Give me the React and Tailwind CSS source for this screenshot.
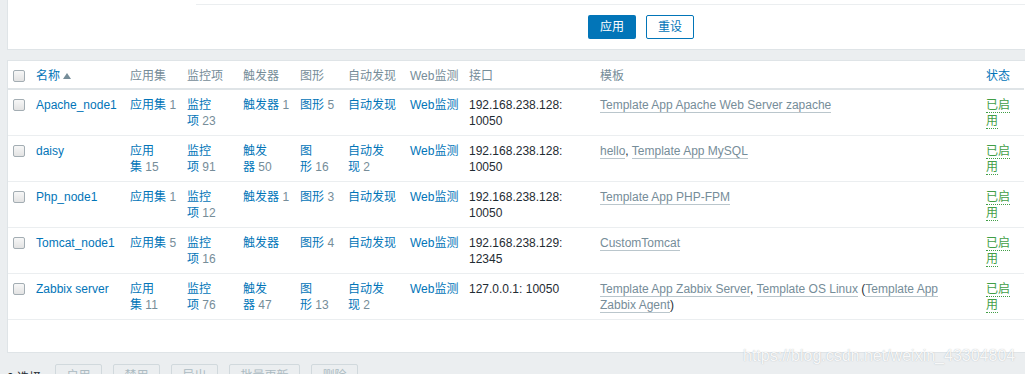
import React from "react"

// host list, laid out like the zabbix 4 blue theme host table
const hosts = [
  {
    name: "Apache_node1",
    apps: 1, items: 23, triggers: 1, graphs: 5, discovery: null,
    iface: "192.168.238.128: 10050",
    templates: [{ t: "Template App Apache Web Server zapache", link: true }],
  },
  {
    name: "daisy",
    apps: 15, items: 91, triggers: 50, graphs: 16, discovery: 2,
    iface: "192.168.238.128: 10050",
    templates: [
      { t: "hello", link: true },
      { t: ", " },
      { t: "Template App MySQL", link: true },
    ],
  },
  {
    name: "Php_node1",
    apps: 1, items: 12, triggers: 1, graphs: 3, discovery: null,
    iface: "192.168.238.128: 10050",
    templates: [{ t: "Template App PHP-FPM", link: true }],
  },
  {
    name: "Tomcat_node1",
    apps: 5, items: 16, triggers: null, graphs: 4, discovery: null,
    iface: "192.168.238.129: 12345",
    templates: [{ t: "CustomTomcat", link: true }],
  },
  {
    name: "Zabbix server",
    apps: 11, items: 76, triggers: 47, graphs: 13, discovery: 2,
    iface: "127.0.0.1: 10050",
    templates: [
      { t: "Template App Zabbix Server", link: true },
      { t: ", " },
      { t: "Template OS Linux", link: true },
      { t: " (" },
      { t: "Template App Zabbix Agent", link: true },
      { t: ")" },
    ],
  },
]

const footerButtons = ["启用", "禁用", "导出", "批量更新", "删除"]

function Checkbox() {
  return (
    <span className="block w-[12px] h-[12px] mt-[2px] rounded-[2px] border border-[#a3adb3] bg-gradient-to-b from-[#f7f7f7] to-[#e3e3e3]" />
  )
}

// link label with a grey counter; the last glyph sticks to the counter so
// narrow columns break like "监控 / 项 23"
function CountLink({ label, count }) {
  if (count == null) return <a className="text-[#0275b8]">{label}</a>
  return (
    <>
      <a className="text-[#0275b8]">{label.slice(0, -1)}</a>
      <span className="whitespace-nowrap">
        <a className="text-[#0275b8]">{label.slice(-1)}</a>{" "}
        <span className="text-[#768d99]">{count}</span>
      </span>
    </>
  )
}

const th = "text-left font-normal align-top pt-[7px] pb-[4px] pr-[8px] border-b-2 border-[#dfe4e7]"
const td = "align-top pt-[7px] pb-[6px] pr-[8px]"

export default function App() {
  return (
    <div className="relative w-[1025px] h-[374px] overflow-hidden bg-[#ebeef0] pl-[7px] text-[12px] leading-4 text-[#1f2c33] font-['Liberation_Sans','Noto_Sans_CJK_SC',sans-serif]">

      {/* filter panel, cropped at the top */}
      <div className="bg-white border-l border-b border-[#dfe4e7] pb-[10px]">
        <div className="ml-[188px] pt-[4px] border-b border-[#ebeef0]" />
        <div className="flex gap-[10px] ml-[580px] mt-[10px]">
          <button className="w-[48px] h-[24px] rounded-[2px] bg-[#0275b8] text-white">应用</button>
          <button className="w-[48px] h-[24px] rounded-[2px] border border-[#0275b8] text-[#0275b8] bg-white">重设</button>
        </div>
      </div>

      {/* host table */}
      <div className="mt-[10px] bg-white border-l border-y border-[#dfe4e7] pb-[32px]">
        <table className="table-fixed border-collapse w-[1016px]">
          <colgroup>
            <col className="w-[28px]" />
            <col className="w-[94px]" />
            <col className="w-[57px]" />
            <col className="w-[56px]" />
            <col className="w-[57px]" />
            <col className="w-[48px]" />
            <col className="w-[62px]" />
            <col className="w-[59px]" />
            <col className="w-[131px]" />
            <col className="w-[386px]" />
            <col className="w-[38px]" />
          </colgroup>
          <thead>
            <tr className="text-[#768d99]">
              <th className={`${th} pl-[5px]`}><Checkbox /></th>
              <th className={th}>
                <span className="text-[#0275b8]">名称</span>
                <span className="inline-block ml-[3px] mb-[1px] w-0 h-0 border-x-[4px] border-x-transparent border-b-[6px] border-b-[#768d99]" />
              </th>
              <th className={th}>应用集</th>
              <th className={th}>监控项</th>
              <th className={th}>触发器</th>
              <th className={th}>图形</th>
              <th className={th}>自动发现</th>
              <th className={th}>Web监测</th>
              <th className={th}>接口</th>
              <th className={th}>模板</th>
              <th className={`${th} text-[#0275b8]`}>状态</th>
            </tr>
          </thead>
          <tbody>
            {hosts.map((h) => (
              <tr key={h.name} className="border-b border-[#ebeef0]">
                <td className={`${td} pl-[5px]`}><Checkbox /></td>
                <td className={td}><a className="text-[#0275b8]">{h.name}</a></td>
                <td className={td}><CountLink label="应用集" count={h.apps} /></td>
                <td className={td}><CountLink label="监控项" count={h.items} /></td>
                <td className={td}><CountLink label="触发器" count={h.triggers} /></td>
                <td className={td}><CountLink label="图形" count={h.graphs} /></td>
                <td className={td}><CountLink label="自动发现" count={h.discovery} /></td>
                <td className={td}><a className="text-[#0275b8]">Web监测</a></td>
                <td className={td}>{h.iface}</td>
                <td className={`${td} pr-[30px]`}>
                  {h.templates.map((p, i) =>
                    p.link ? (
                      <a key={i} className="text-[#768d99] border-b border-[#768d99]/50">{p.t}</a>
                    ) : (
                      <span key={i}>{p.t}</span>
                    )
                  )}
                </td>
                <td className={td}>
                  <a className="text-[#429e47] border-b border-dotted border-[#429e47]">已启用</a>
                </td>
              </tr>
            ))}
          </tbody>
        </table>
      </div>

      {/* mass action footer, cropped at the bottom */}
      <div className="flex items-start mt-[11px]">
        <span className="w-[48px] pt-[6px] text-[#1f2c33]">0 选择</span>
        <div className="flex gap-[11px]">
          {footerButtons.map((b) => (
            <button
              key={b}
              className={`${b.length > 2 ? "w-[71px]" : "w-[47px]"} h-[24px] rounded-[2px] border border-[#d1d9dd] text-[#acbbc2]`}
            >
              {b}
            </button>
          ))}
        </div>
      </div>

      {/* blog watermark over the screenshot */}
      <span className="absolute left-[743px] top-[346px] text-[16px] leading-[20px] text-white/90 [text-shadow:0_0_1px_rgba(110,120,130,0.55)] font-['Liberation_Sans',sans-serif]">
        https://blog.csdn.net/weixin_43304804
      </span>
    </div>
  )
}
